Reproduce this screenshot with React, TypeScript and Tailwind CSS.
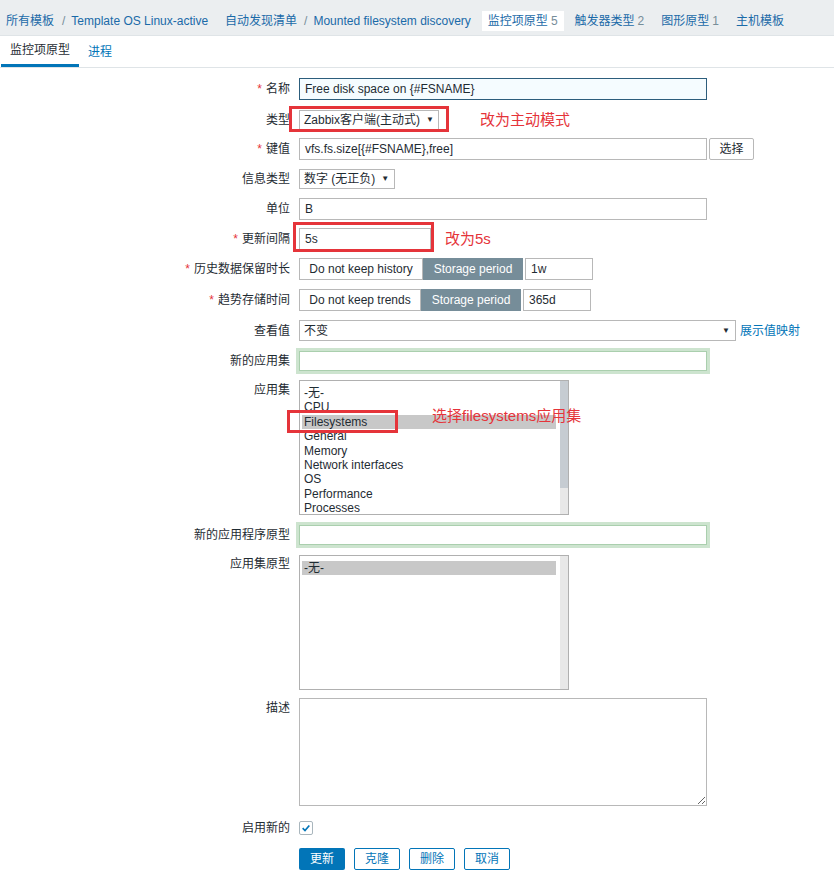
import React from "react";

const RED = "#e5343a";

interface LabelProps {
  text: string;
  required?: boolean;
  className?: string;
}

const Label: React.FC<LabelProps> = ({ text, required, className = "" }) => (
  <div className={`w-[290px] shrink-0 text-right leading-[14px] text-[#1f2c33] ${className}`}>
    {required && <span className="mr-[4px] text-[#e5343a]">*</span>}
    {text}
  </div>
);

const Select: React.FC<{ value: string; className?: string }> = ({ value, className = "" }) => (
  <div
    className={`flex items-center justify-between whitespace-nowrap border border-[#b8b8b8] bg-white pl-[4px] pr-[5px] text-[#1f2c33] ${className}`}
  >
    <span className="whitespace-nowrap">{value}</span>
    <span className="ml-[6px] shrink-0 text-[8px] leading-none text-[#1f2c33]">▼</span>
  </div>
);

const TextInput: React.FC<{ value?: string; className?: string }> = ({ value = "", className = "" }) => (
  <div className={`flex items-center border border-[#b8b8b8] bg-white pl-[5px] text-[#1f2c33] ${className}`}>
    {value}
  </div>
);

const GreenInput: React.FC = () => (
  <div className="h-[20px] w-[408px] border border-[#aacfae] bg-white shadow-[0_0_0_3px_#cde4cf]" />
);

interface ListBoxProps {
  items: string[];
  selected: string;
  thumb?: boolean;
}

const ListBox: React.FC<ListBoxProps> = ({ items, selected, thumb }) => (
  <div className="flex h-[135px] w-[270px] border border-[#b0b0b0] bg-white">
    <div className="flex-1 overflow-hidden pl-[2px] pr-[4px] pt-[5px]">
      {items.map((item) => (
        <div
          key={item}
          className={`h-[14.4px] pl-[2px] leading-[14.4px] text-[#1f2c33] ${
            item === selected ? "bg-[#c8c8c8]" : ""
          }`}
        >
          {item}
        </div>
      ))}
    </div>
    <div className="w-[8px] bg-[#e8e8e8]">{thumb && <div className="h-[107px] bg-[#c6ccd2]" />}</div>
  </div>
);

const Segmented: React.FC<{ off: string; offWidth: string; value: string }> = ({ off, offWidth, value }) => (
  <div className="flex h-[22px] items-stretch">
    <div className={`flex items-center justify-center border border-[#b8b8b8] bg-white text-[#1f2c33] ${offWidth}`}>
      {off}
    </div>
    <div className="flex w-[100px] items-center justify-center bg-[#768d99] text-white">Storage period</div>
    <div className="ml-[2px] flex w-[68px] items-center border border-[#b8b8b8] bg-white pl-[5px]">{value}</div>
  </div>
);

export default function App() {
  return (
    <div className="min-h-[875px] w-[834px] bg-white font-['Liberation_Sans','Noto_Sans_CJK_SC',sans-serif] text-[12px] text-[#1f2c33]">
      {/* Breadcrumbs */}
      <div className="flex h-[36px] items-end border-b border-[#dfe4e7] bg-[#ebeef0] pb-[4px]">
        <div className="flex h-[20px] items-center gap-[5px] whitespace-nowrap text-[#1a6aa8]">
          <div className="flex items-center px-[6px]">
            <span>所有模板</span>
            <span className="ml-[8px] mr-[6px] text-[#768d99]">/</span>
            <span>Template OS Linux-active</span>
          </div>
          <div className="flex items-center px-[6px]">
            <span>自动发现清单</span>
            <span className="ml-[7px] mr-[6px] text-[#768d99]">/</span>
            <span>Mounted filesystem discovery</span>
          </div>
          <div className="flex h-[20px] items-center bg-white px-[6px]">
            监控项原型<span className="ml-[3px] text-[#768d99]">5</span>
          </div>
          <div className="flex items-center px-[6px]">
            触发器类型<span className="ml-[3px] text-[#768d99]">2</span>
          </div>
          <div className="flex items-center px-[6px]">
            图形原型<span className="ml-[3px] text-[#768d99]">1</span>
          </div>
          <div className="flex items-center px-[6px]">主机模板</div>
        </div>
      </div>

      {/* Tabs */}
      <div className="flex h-[32px] border-b border-[#dfe4e7] pl-[1px]">
        <div className="flex items-center border-b-[3px] border-[#0275b8] px-[9px] text-[#1f2c33]">监控项原型</div>
        <div className="flex items-center px-[9px] text-[#0275b8]">进程</div>
      </div>

      {/* Form */}
      <div className="flex flex-col pb-[6px]">
        <div className="mt-[10px] flex items-center">
          <Label text="名称" required />
          <div className="ml-[9px] flex h-[22px] w-[408px] items-center border border-[#2c5d7c] bg-[#f5fcff] pl-[5px]">
            Free disk space on {"{#FSNAME}"}
          </div>
        </div>

        <div className="mt-[10px] flex items-center">
          <Label text="类型" />
          <div className="relative ml-[9px]">
            <Select value="Zabbix客户端(主动式)" className="h-[20px] w-[140px]" />
            <div className="absolute left-[-10px] top-[-4px] h-[26px] w-[160px] border-[3px] border-[#e5343a]" />
          </div>
          <span className="ml-[41px] text-[15px] leading-[18px]" style={{ color: RED }}>
            改为主动模式
          </span>
        </div>

        <div className="mt-[8px] flex items-center">
          <Label text="键值" required />
          <TextInput value="vfs.fs.size[{#FSNAME},free]" className="ml-[9px] h-[22px] w-[408px]" />
          <button className="ml-[2px] h-[22px] w-[45px] rounded-[2px] border border-[#b8b8b8] bg-white text-[#1f2c33]">
            选择
          </button>
        </div>

        <div className="mt-[9px] flex items-center">
          <Label text="信息类型" />
          <Select value="数字 (无正负)" className="ml-[9px] h-[20px] w-[96px]" />
        </div>

        <div className="mt-[9px] flex items-center">
          <Label text="单位" />
          <TextInput value="B" className="ml-[9px] h-[22px] w-[408px]" />
        </div>

        <div className="mt-[8px] flex items-center">
          <Label text="更新间隔" required />
          <div className="relative ml-[9px]">
            <TextInput value="5s" className="h-[22px] w-[132px]" />
            <div className="absolute left-[-6px] top-[-6px] h-[30px] w-[141px] border-[3px] border-[#e5343a]" />
          </div>
          <span className="ml-[14px] text-[15px] leading-[18px] text-[#e5343a]">改为5s</span>
        </div>

        <div className="mt-[8px] flex items-center">
          <Label text="历史数据保留时长" required />
          <div className="ml-[9px]">
            <Segmented off="Do not keep history" offWidth="w-[124px]" value="1w" />
          </div>
        </div>

        <div className="mt-[9px] flex items-center">
          <Label text="趋势存储时间" required />
          <div className="ml-[9px]">
            <Segmented off="Do not keep trends" offWidth="w-[122px]" value="365d" />
          </div>
        </div>

        <div className="mt-[9px] flex items-center">
          <Label text="查看值" />
          <Select value="不变" className="ml-[9px] h-[21px] w-[437px]" />
          <span className="ml-[4px] text-[#0275b8]">展示值映射</span>
        </div>

        <div className="mt-[10px] flex items-center">
          <Label text="新的应用集" />
          <div className="ml-[9px]">
            <GreenInput />
          </div>
        </div>

        <div className="mt-[9px] flex items-start">
          <Label text="应用集" className="pt-[3px]" />
          <div className="relative ml-[9px]">
            <ListBox
              thumb
              selected="Filesystems"
              items={[
                "-无-",
                "CPU",
                "Filesystems",
                "General",
                "Memory",
                "Network interfaces",
                "OS",
                "Performance",
                "Processes",
              ]}
            />
            <div className="absolute left-[-12px] top-[30px] h-[23px] w-[111px] border-[3px] border-[#e5343a]" />
            <span className="absolute left-[133px] top-[27px] whitespace-nowrap text-[15px] leading-[18px] text-[#e5343a]">
              选择filesystems应用集
            </span>
          </div>
        </div>

        <div className="mt-[10px] flex items-center">
          <Label text="新的应用程序原型" />
          <div className="ml-[9px]">
            <GreenInput />
          </div>
        </div>

        <div className="mt-[10px] flex items-start">
          <Label text="应用集原型" className="pt-[2px]" />
          <div className="ml-[9px]">
            <ListBox selected="-无-" items={["-无-"]} />
          </div>
        </div>

        <div className="mt-[8px] flex items-start">
          <Label text="描述" className="pt-[3px]" />
          <textarea
            readOnly
            className="ml-[9px] block h-[108px] w-[408px] resize border border-[#b8b8b8] bg-white outline-none"
          />
        </div>

        <div className="mt-[15px] flex items-center">
          <Label text="启用新的" />
          <div className="ml-[9px] flex h-[14px] w-[14px] items-center justify-center rounded-[2px] border border-[#a9b6bd] bg-white">
            <svg viewBox="0 0 12 12" className="h-[10px] w-[10px]">
              <path d="M2 6.2 L4.8 9 L10 3" fill="none" stroke="#0275b8" strokeWidth="2" />
            </svg>
          </div>
        </div>

        <div className="mt-[13px] flex items-center">
          <div className="w-[290px] shrink-0" />
          <div className="ml-[9px] flex gap-[9px]">
            <button className="h-[22px] w-[46px] rounded-[2px] bg-[#0275b8] text-white">更新</button>
            <button className="h-[22px] w-[46px] rounded-[2px] border border-[#0275b8] bg-white text-[#0275b8]">
              克隆
            </button>
            <button className="h-[22px] w-[46px] rounded-[2px] border border-[#0275b8] bg-white text-[#0275b8]">
              删除
            </button>
            <button className="h-[22px] w-[46px] rounded-[2px] border border-[#0275b8] bg-white text-[#0275b8]">
              取消
            </button>
          </div>
        </div>
      </div>
    </div>
  );
}
